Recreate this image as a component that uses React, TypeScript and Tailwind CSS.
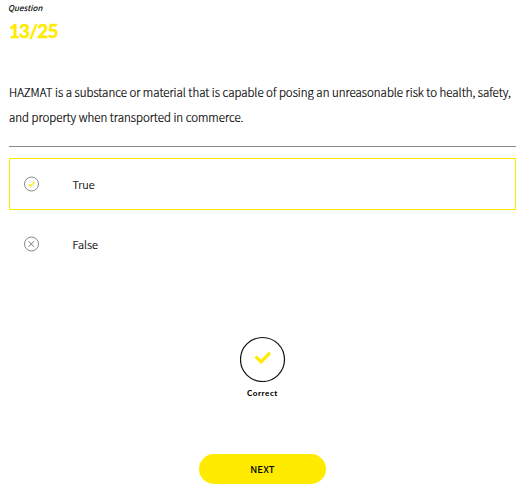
const CJK = "font-['Noto_Sans_CJK_SC','Noto_Sans',sans-serif]";

function AnswerIcon({ correct }: { correct: boolean }) {
  return (
    <svg className="ml-[14px] h-4 w-4 shrink-0" viewBox="0 0 16 16" fill="none">
      <circle cx="7.5" cy="8" r="7" stroke="#888990" />
      {correct ? (
        <path d="M4.5 8.2 6.6 10.1 10.7 6" stroke="#ffeb00" strokeWidth="1.2" />
      ) : (
        <path d="M4.6 5.2 10 10.8M10 5.2 4.6 10.8" stroke="#777880" strokeWidth="1" />
      )}
    </svg>
  );
}

export default function App() {
  return (
    <main className={`flex h-[496px] w-[532px] flex-col bg-white pl-[9px] text-black ${CJK}`}>
      <p className="-ml-px mt-[2px] h-[12px] text-[8px] leading-[12px] tracking-[0.1px] italic [-webkit-text-stroke:0.15px_#000]">Question</p>
      <h1 className="mt-[5px] h-[24px] font-['Lato',sans-serif] text-[19px] leading-[24px] font-black tracking-[-0.9px] text-[#ffeb00] [-webkit-text-stroke:0.3px_#ffeb00]">
        13/25
      </h1>
      <p className="mt-[37px] h-[50px] text-[11.5px] leading-[25px] font-light tracking-[-0.01px] whitespace-nowrap [-webkit-text-stroke:0.2px_#000]">
        HAZMAT is a substance or material that is capable of posing an unreasonable risk to health, safety,
        <br />
        and property when transported in commerce.
      </p>
      <hr className="mt-[16px] h-px w-[507px] border-0 bg-[#898989]" />
      <div className="mt-[11px] flex h-[52px] w-[507px] items-center border border-[#ffeb00]">
        <AnswerIcon correct />
        <span className="ml-[32.5px] text-[11px] leading-[18px] font-light [-webkit-text-stroke:0.2px_#000]">True</span>
      </div>
      <div className="mt-[8px] flex h-[52px] w-[507px] items-center border border-transparent">
        <AnswerIcon correct={false} />
        <span className="ml-[32.5px] text-[11px] leading-[18px] font-light [-webkit-text-stroke:0.2px_#000]">False</span>
      </div>
      <div className="mt-[66px] flex w-[507px] flex-col items-center">
        <div className="flex h-[46px] w-[46px] items-center justify-center">
          <svg className="h-[46px] w-[46px]" viewBox="0 0 46 46" fill="none">
            <circle cx="22.5" cy="23.5" r="22" stroke="#111" strokeWidth="1.2" />
            <path d="M16.5 21.5 21.2 25.8 29 17.8" stroke="#ffeb00" strokeWidth="3.2" strokeLinecap="round" />
          </svg>
        </div>
        <span className="mt-[5px] font-['Lato',sans-serif] text-[8px] leading-[12px] font-black tracking-[0.55px]">Correct</span>
        <button className="mt-[55.4px] h-[30px] w-[127px] rounded-full bg-[#ffeb00] text-[9.5px] leading-[30px] font-medium tracking-[0.15px]">
          NEXT
        </button>
      </div>
    </main>
  );
}
